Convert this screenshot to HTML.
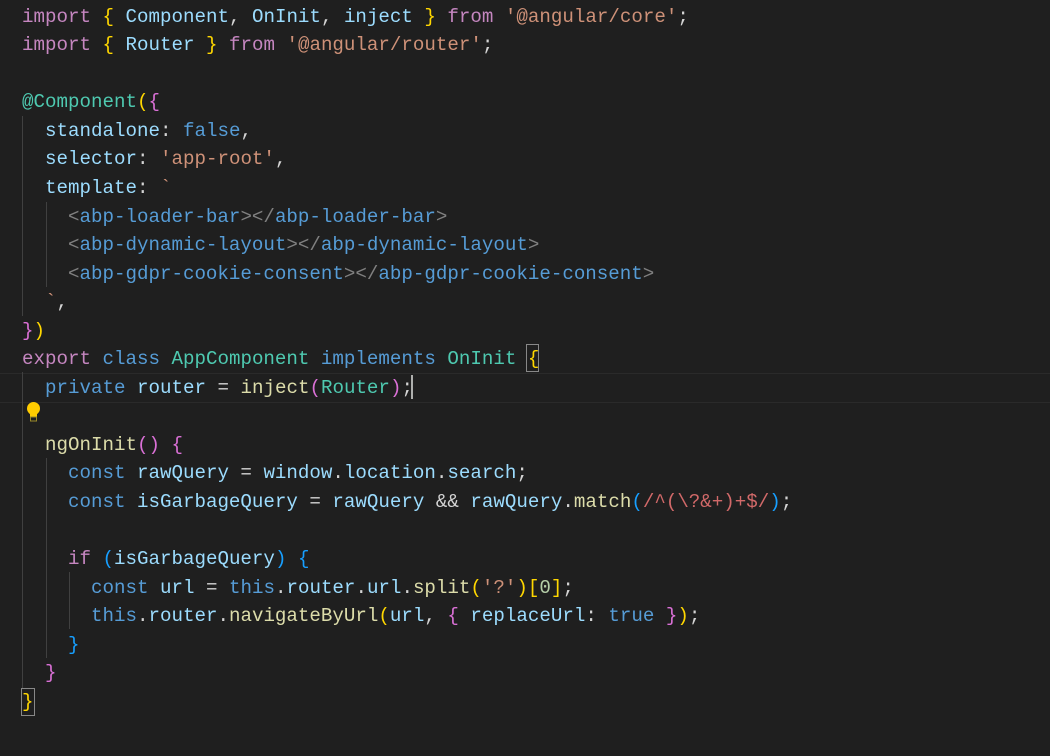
<!DOCTYPE html>
<html><head><meta charset="utf-8"><style>
html,body{margin:0;padding:0;background:#1f1f1f;width:1050px;height:756px;overflow:hidden}
#c{position:absolute;left:22px;top:2.7px;font-family:"Liberation Mono",monospace;font-size:19.17px;line-height:28.54px;color:#d4d4d4;white-space:pre}
.k{color:#C586C0}.b{color:#569CD6}.v{color:#9CDCFE}.s{color:#CE9178}.t{color:#4EC9B0}.f{color:#DCDCAA}
.y{color:#FFD700}.p{color:#DA70D6}.l{color:#179FFF}.n{color:#B5CEA8}.r{color:#D16969}.g{color:#808080}.tg{color:#569CD6}
.g1{position:absolute;width:1px;background:#404040}
.cur{position:absolute;left:0;top:373px;width:1050px;height:28px;border-top:1px solid #2a2a2a;border-bottom:1px solid #2a2a2a;background:#1f1f1f}
</style></head><body>
<div class="cur"></div>
<div class="g1" style="left:22px;top:116px;height:200px"></div>
<div class="g1" style="left:46px;top:202px;height:85px"></div>
<div class="g1" style="left:22px;top:372px;height:316px"></div>
<div class="g1" style="left:46px;top:458px;height:200px"></div>
<div class="g1" style="left:69px;top:572px;height:57px"></div>
<div style="position:absolute;left:411px;top:375px;width:2px;height:24px;background:#aeafad"></div>
<div style="position:absolute;left:21px;top:688px;width:12px;height:26px;border:1px solid #888"></div>
<div style="position:absolute;left:526px;top:344px;width:11px;height:26px;border:1px solid #888"></div>
<svg style="position:absolute;left:25px;top:401px" width="17" height="22" viewBox="0 0 17 22"><circle cx="8.5" cy="7.5" r="6.5" fill="#FFCC00"/><rect x="5" y="11" width="7" height="6" fill="#FFCC00"/><rect x="5.5" y="16" width="6" height="4" fill="#1f1f1f" stroke="#9a8a2a"/></svg>
<div id="c"><span class="k">import</span> <span class="y">{</span> <span class="v">Component</span>, <span class="v">OnInit</span>, <span class="v">inject</span> <span class="y">}</span> <span class="k">from</span> <span class="s">'@angular/core'</span>;
<span class="k">import</span> <span class="y">{</span> <span class="v">Router</span> <span class="y">}</span> <span class="k">from</span> <span class="s">'@angular/router'</span>;

<span class="t">@Component</span><span class="y">(</span><span class="p">{</span>
  <span class="v">standalone</span>: <span class="b">false</span>,
  <span class="v">selector</span>: <span class="s">'app-root'</span>,
  <span class="v">template</span>: <span class="s">`</span>
    <span class="g">&lt;</span><span class="tg">abp-loader-bar</span><span class="g">&gt;&lt;/</span><span class="tg">abp-loader-bar</span><span class="g">&gt;</span>
    <span class="g">&lt;</span><span class="tg">abp-dynamic-layout</span><span class="g">&gt;&lt;/</span><span class="tg">abp-dynamic-layout</span><span class="g">&gt;</span>
    <span class="g">&lt;</span><span class="tg">abp-gdpr-cookie-consent</span><span class="g">&gt;&lt;/</span><span class="tg">abp-gdpr-cookie-consent</span><span class="g">&gt;</span>
  <span class="s">`</span>,
<span class="p">}</span><span class="y">)</span>
<span class="k">export</span> <span class="b">class</span> <span class="t">AppComponent</span> <span class="b">implements</span> <span class="t">OnInit</span> <span class="y">{</span>
  <span class="b">private</span> <span class="v">router</span> = <span class="f">inject</span><span class="p">(</span><span class="t">Router</span><span class="p">)</span>;

  <span class="f">ngOnInit</span><span class="p">()</span> <span class="p">{</span>
    <span class="b">const</span> <span class="v">rawQuery</span> = <span class="v">window</span>.<span class="v">location</span>.<span class="v">search</span>;
    <span class="b">const</span> <span class="v">isGarbageQuery</span> = <span class="v">rawQuery</span> &amp;&amp; <span class="v">rawQuery</span>.<span class="f">match</span><span class="l">(</span><span class="r">/^(\?&amp;+)+$/</span><span class="l">)</span>;

    <span class="k">if</span> <span class="l">(</span><span class="v">isGarbageQuery</span><span class="l">)</span> <span class="l">{</span>
      <span class="b">const</span> <span class="v">url</span> = <span class="b">this</span>.<span class="v">router</span>.<span class="v">url</span>.<span class="f">split</span><span class="y">(</span><span class="s">'?'</span><span class="y">)</span><span class="y">[</span><span class="n">0</span><span class="y">]</span>;
      <span class="b">this</span>.<span class="v">router</span>.<span class="f">navigateByUrl</span><span class="y">(</span><span class="v">url</span>, <span class="p">{</span> <span class="v">replaceUrl</span>: <span class="b">true</span> <span class="p">}</span><span class="y">)</span>;
    <span class="l">}</span>
  <span class="p">}</span>
<span class="y">}</span></div>
</body></html>
